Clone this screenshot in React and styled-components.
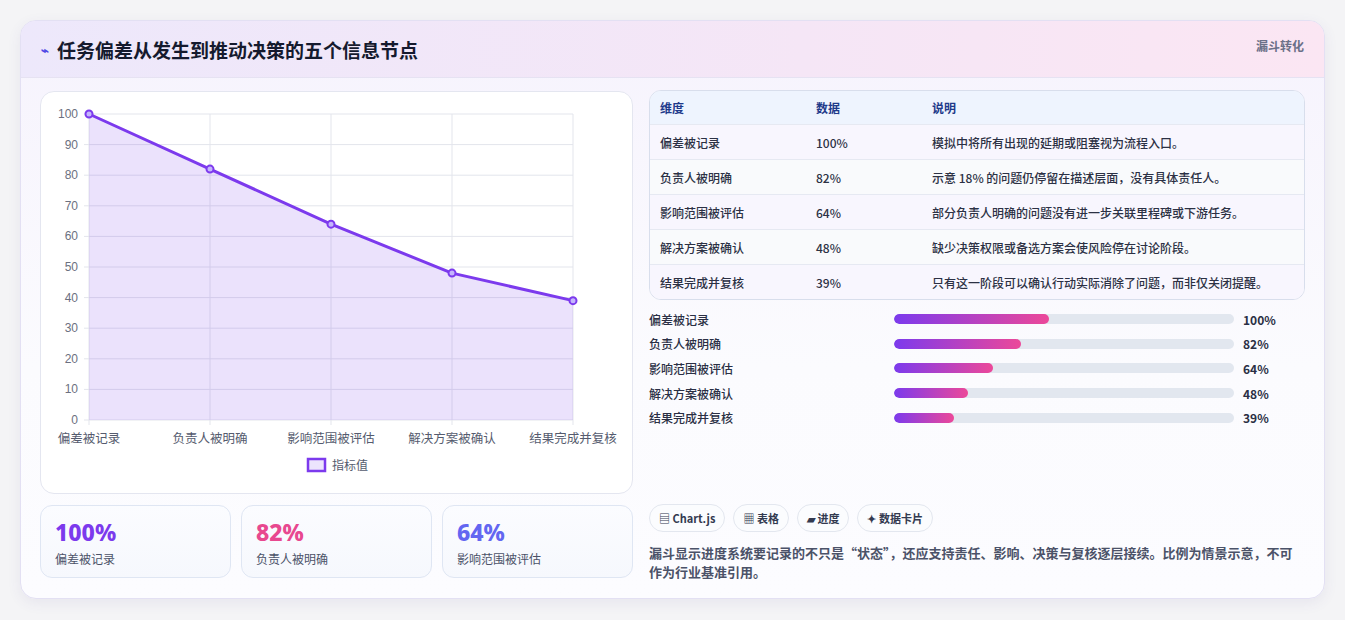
import React from "react";
import styled, { createGlobalStyle } from "styled-components";

const G = createGlobalStyle`
  body{margin:0;background:#f4f4f6;font-family:"Noto Sans CJK SC","Noto Sans",sans-serif;}
`;
const Page = styled.div`padding:20px;height:620px;box-sizing:border-box;`;
const Card = styled.div`
  background:linear-gradient(180deg,#f6f3fd,#fbfbfe 60%,#fcfcff);border:1px solid #e3e0f3;border-radius:16px;
  overflow:hidden;height:579px;box-sizing:border-box;box-shadow:0 4px 14px rgba(80,70,140,.08);
`;
const Header = styled.div`
  height:56px;display:flex;align-items:center;justify-content:space-between;padding:0 20px;
  background:linear-gradient(90deg,#ede8fb,#f5e6f6 60%,#fbe6f3);border-bottom:1px solid #e6e2f2;
`;
const Title = styled.h1`margin:0;font-size:19px;font-weight:700;color:#151a2e;display:flex;align-items:center;gap:8px;`;
const Badge = styled.span`font-size:12px;font-weight:700;color:#6b7088;align-self:flex-start;margin-top:16px;`;
const Body = styled.div`display:grid;grid-template-columns:593px 656px;gap:16px;padding:15px 19px 0 19px;`;
const Col = styled.div`display:flex;flex-direction:column;`;
const ChartBox = styled.div`background:#fff;border:1px solid #e4e6f0;border-radius:14px;height:403px;box-sizing:border-box;overflow:hidden;margin-top:-2px;`;
const Stats = styled.div`display:grid;grid-template-columns:repeat(3,1fr);gap:10px;margin-top:11px;`;
const Stat = styled.div`border:1px solid #dfe6f3;border-radius:12px;background:linear-gradient(180deg,#fbfcff,#f6f8fd);height:73px;box-sizing:border-box;padding:12px 14px;`;
const Big = styled.div`font-size:23px;font-weight:800;color:${p=>p.c};line-height:28px;font-family:"Noto Sans",sans-serif;`;
const Small = styled.div`font-size:12px;color:#4b5268;margin-top:4px;`;
const Table = styled.div`border:1px solid #d8deec;border-radius:12px;overflow:hidden;background:#fff;margin-top:-3px;`;
const Row = styled.div`display:grid;grid-template-columns:156px 116px 1fr;height:${p=>p.h||35}px;align-items:center;padding-left:10px;
  font-size:12px;color:${p=>p.head?"#1e3a8a":"#2c3144"};font-weight:${p=>p.head?700:500};
  background:${p=>p.head?"#eef4fe":p.alt?"#f9fafc":"#f8f6fe"};border-top:${p=>p.first?"none":"1px solid #e6e9f2"};box-sizing:border-box;`;
const Bars = styled.div`display:flex;flex-direction:column;gap:6.7px;margin-top:10px;`;
const BarRow = styled.div`display:grid;grid-template-columns:245px 340px 1fr;align-items:center;font-size:12px;font-weight:500;color:#2a2f44;height:18px;
  & > span:last-child{font-weight:700;padding-left:9px;}`;
const Track = styled.div`height:10px;border-radius:5px;background:#e2e7ef;overflow:hidden;`;
const Fill = styled.div`height:100%;border-radius:5px;background:linear-gradient(90deg,#7c3aed,#ec4899);`;
const Tags = styled.div`display:flex;gap:8px;margin-top:auto;`;
const Tag = styled.span`font-size:11px;font-weight:700;color:#333a50;border:1px solid #e3e7ef;background:#fbfcfe;border-radius:14px;padding:5px 9px;`;
const Note = styled.p`margin:11px 0 0;font-size:13px;line-height:19px;color:#4b5268;font-weight:600;`;
const RightCol = styled(Col)`height:488px;`;

const data=[["偏差被记录",100,"模拟中将所有出现的延期或阻塞视为流程入口。"],["负责人被明确",82,"示意 18% 的问题仍停留在描述层面，没有具体责任人。"],["影响范围被评估",64,"部分负责人明确的问题没有进一步关联里程碑或下游任务。"],["解决方案被确认",48,"缺少决策权限或备选方案会使风险停在讨论阶段。"],["结果完成并复核",39,"只有这一阶段可以确认行动实际消除了问题，而非仅关闭提醒。"]];

function Chart(){
  const x0=48,x1=532,y0=22,y1=328;
  const xs=[0,1,2,3,4].map(i=>x0+i*(x1-x0)/4);
  const y=v=>y1-(v/100)*(y1-y0);
  const pts=data.map((d,i)=>[xs[i],y(d[1])]);
  const line="M"+pts.map(p=>p.join(",")).join(" L");
  const area=line+` L${x1},${y1} L${x0},${y1} Z`;
  return <svg width="593" height="401" style={{display:"block"}}>
    {[0,10,20,30,40,50,60,70,80,90,100].map(v=><g key={v}>
      <line x1={x0-5} x2={x1} y1={y(v)} y2={y(v)} stroke="#e3e5ec"/>
      <text x={x0-11} y={y(v)+4} textAnchor="end" fontSize="12" fill="#6b7080" fontFamily="Liberation Sans">{v}</text></g>)}
    {xs.map((x,i)=><line key={i} x1={x} x2={x} y1={y0} y2={y1+5} stroke="#e3e5ec"/>)}
    <path d={area} fill="rgba(124,58,237,0.15)"/>
    <path d={line} fill="none" stroke="#7c3aed" strokeWidth="3" strokeLinejoin="round"/>
    {pts.map((p,i)=><circle key={i} cx={p[0]} cy={p[1]} r="3.5" fill="#c4b5fd" stroke="#7c3aed" strokeWidth="2"/>)}
    {data.map((d,i)=><text key={i} x={Math.max(xs[i],34)} y={351} textAnchor="middle" fontSize="12.5" fill="#555b6e">{d[0]}</text>)}
    <rect x="267" y="367" width="17" height="12" fill="#ece4fd" stroke="#7c3aed" strokeWidth="2.5"/>
    <text x="291" y="378" fontSize="12" fill="#555b6e">指标值</text>
  </svg>;
}

export default function App(){
  return <Page><G/><Card>
    <Header><Title><span style={{color:"#4f46e5",fontSize:13}}>⌁</span>任务偏差从发生到推动决策的五个信息节点</Title><Badge>漏斗转化</Badge></Header>
    <Body>
      <Col>
        <ChartBox><Chart/></ChartBox>
        <Stats>
          <Stat><Big c="#7c3aed">100%</Big><Small>偏差被记录</Small></Stat>
          <Stat><Big c="#e8488f">82%</Big><Small>负责人被明确</Small></Stat>
          <Stat><Big c="#6366f1">64%</Big><Small>影响范围被评估</Small></Stat>
        </Stats>
      </Col>
      <RightCol>
        <Table>
          <Row head first h={33}><span>维度</span><span>数据</span><span>说明</span></Row>
          {data.map((d,i)=><Row key={i} h={35} alt={i%2===1}><span>{d[0]}</span><span>{d[1]}%</span><span>{d[2]}</span></Row>)}
        </Table>
        <Bars>{data.map((d,i)=><BarRow key={i}><span>{d[0]}</span><Track><Fill style={{width:`${d[1]*0.455}%`}}/></Track><span>{d[1]}%</span></BarRow>)}</Bars>
        <Tags><Tag>▤ Chart.js</Tag><Tag>▦ 表格</Tag><Tag>▰ 进度</Tag><Tag>✦ 数据卡片</Tag></Tags>
        <Note>漏斗显示进度系统要记录的不只是“状态”，还应支持责任、影响、决策与复核逐层接续。比例为情景示意，不可作为行业基准引用。</Note>
      </RightCol>
    </Body>
  </Card></Page>;
}
